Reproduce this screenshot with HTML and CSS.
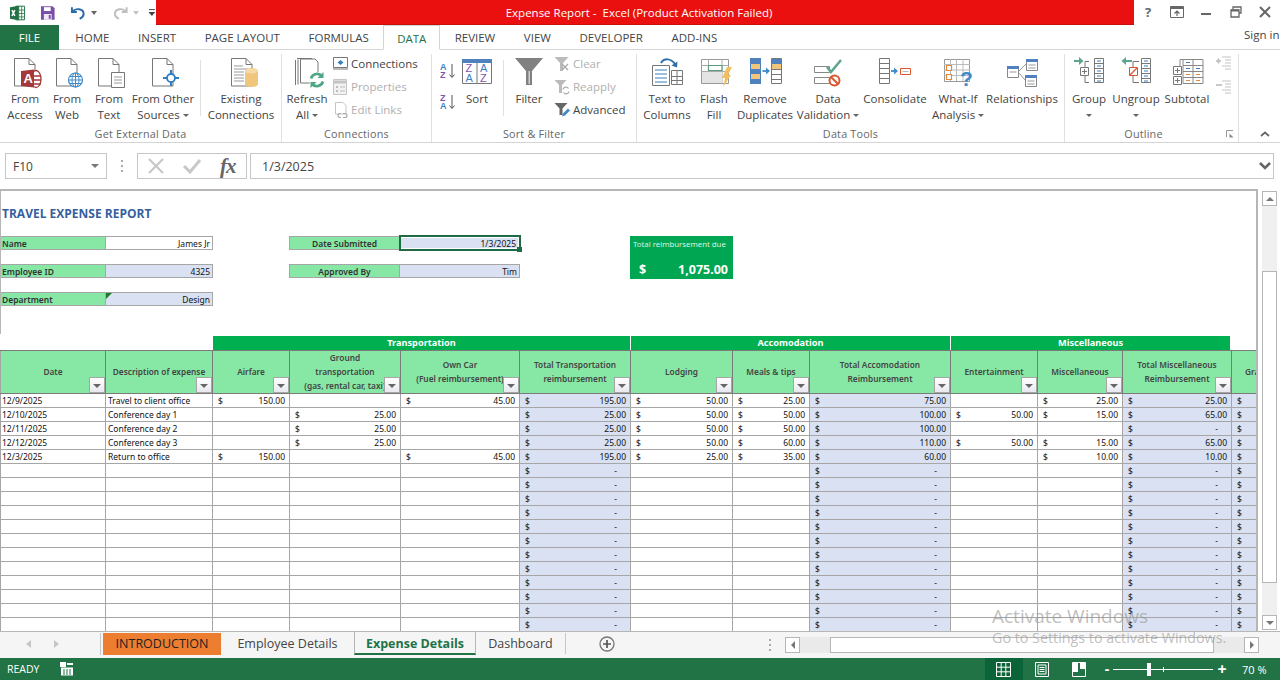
FILE: index.html
```html
<!DOCTYPE html>
<html lang="en">
<head>
<meta charset="utf-8">
<title>Expense Report - Excel</title>
<link rel="stylesheet" href="styles.css">
</head>
<body>
<div class="app">

<header class="titlebar">
  <div class="qat">
    <svg class="q-excel" width="18" height="18" viewBox="0 0 18 18"><path d="M7 2h9v14H7z" fill="#fff" stroke="#217346"/><path d="M10 2v14M13 2v14M7 6h9M7 9.500h9M7 13h9" stroke="#217346" stroke-width=".8"/><path d="M1 3l9-1.500v15L1 15z" fill="#217346"/><path d="M3 6l3 6M6 6l-3 6" stroke="#fff" stroke-width="1.500"/></svg>
    <svg class="q-save" width="16" height="16" viewBox="0 0 16 16"><path d="M1 1h12l2 2v12H1z" fill="#7b4fa8"/><path d="M4 2h7v4H4z" fill="#fff"/><path d="M4 9h8v6H4z" fill="#f0e8f6"/><path d="M9 10h2v4H9z" fill="#7b4fa8"/></svg>
    <svg class="q-undo" width="16" height="16" viewBox="0 0 16 16"><path d="M2 2v5h5M2.500 6.500C6 2.500 14 3.500 14 9c0 2.500-2 4-4 5" fill="none" stroke="#2b6ca8" stroke-width="2"/></svg>
    <span class="q-drop"></span>
    <svg class="q-redo" width="16" height="16" viewBox="0 0 16 16"><path d="M14 2v5H9M13.500 6.500C10 2.500 2 3.500 2 9c0 2.500 2 4 4 5" fill="none" stroke="#bfbfbf" stroke-width="2"/></svg>
    <span class="q-drop q-drop-off"></span>
    <svg class="q-more" width="8" height="10" viewBox="0 0 8 10"><path d="M1 1.500h6" stroke="#444"/><path d="M.500 4h7L4 8z" fill="#444"/></svg>
  </div>
  <div class="title">Expense Report -&nbsp; Excel (Product Activation Failed)</div>
  <div class="winctl">
    <span class="help">?</span>
    <svg class="wc1" width="14" height="12" viewBox="0 0 14 12"><path d="M.500.500h13v11H.500z" fill="none" stroke="#666"/><path d="M1 2h12" stroke="#666" stroke-width="2"/><path d="M7 10V5M4.500 7.500L7 5l2.500 2.500" fill="none" stroke="#666" stroke-width="1.200"/></svg>
    <svg class="wc2" width="12" height="12" viewBox="0 0 12 12"><path d="M1 8h10" stroke="#666" stroke-width="2"/></svg>
    <svg class="wc3" width="12" height="12" viewBox="0 0 12 12"><path d="M3 3V1h8v6H9" fill="none" stroke="#666" stroke-width="1.300"/><path d="M1 4h8v7H1z" fill="none" stroke="#666" stroke-width="1.300"/><path d="M1 4.500h8" stroke="#666" stroke-width="2"/></svg>
    <svg class="wc4" width="12" height="12" viewBox="0 0 12 12"><path d="M1 1l10 10M11 1L1 11" stroke="#666" stroke-width="2"/></svg>
  </div>
</header>

<nav class="tabs">
  <span class="tab-file">FILE</span>
  <span class="tab">HOME</span>
  <span class="tab">INSERT</span>
  <span class="tab">PAGE LAYOUT</span>
  <span class="tab">FORMULAS</span>
  <span class="tab tab-on">DATA</span>
  <span class="tab">REVIEW</span>
  <span class="tab">VIEW</span>
  <span class="tab">DEVELOPER</span>
  <span class="tab">ADD-INS</span>
  <span class="signin">Sign in</span>
</nav>

<section class="ribbon">
  <div class="group g-ext">
    <div class="cmds">
      <div class="btn w42">
        <svg class="ico" viewBox="0 0 40 36"><path d="M9.500 2.500H24l6 6V30H9.500z" fill="#fff" stroke="#777"/><path d="M24 2.500v6h6" fill="none" stroke="#777"/><ellipse cx="31" cy="23" rx="5" ry="8.500" fill="#fff" stroke="#a4373a" stroke-width="1.300"/><path d="M26 20h10M26 24h10M26 28h10" stroke="#a4373a" stroke-width="1.300"/><path d="M16 15l13-1.500v18L16 30z" fill="#a4373a"/><text x="18.500" y="27" class="svg-a">A</text></svg>
        <span>From<br>Access</span>
      </div>
      <div class="btn w42">
        <svg class="ico" viewBox="0 0 40 36"><path d="M9.500 2.500H24l6 6V30H9.500z" fill="#fff" stroke="#777"/><path d="M24 2.500v6h6" fill="none" stroke="#777"/><circle cx="28.500" cy="24" r="7" fill="#fff" stroke="#3f8bc9" stroke-width="1.200"/><path d="M21.500 24h14M22.500 20.500h12M22.500 27.500h12M28.500 17v14" stroke="#3f8bc9"/><ellipse cx="28.500" cy="24" rx="3.500" ry="7" fill="none" stroke="#3f8bc9"/></svg>
        <span>From<br>Web</span>
      </div>
      <div class="btn w42">
        <svg class="ico" viewBox="0 0 40 36"><path d="M9.500 2.500H24l6 6V30H9.500z" fill="#fff" stroke="#777"/><path d="M24 2.500v6h6" fill="none" stroke="#777"/><path d="M22.500 16.500h13v15h-13z" fill="#fff" stroke="#777"/><path d="M25 21h8M25 24h8M25 27h8" stroke="#999"/></svg>
        <span>From<br>Text</span>
      </div>
      <div class="btn w66">
        <svg class="ico" viewBox="0 0 40 36"><path d="M9.500 2.500H24l6 6V30H9.500z" fill="#fff" stroke="#777"/><path d="M24 2.500v6h6" fill="none" stroke="#777"/><path d="M28 14v16M20 22h16" stroke="#2f7fc4" stroke-width="2"/><circle cx="28" cy="22" r="4" fill="#fff" stroke="#2f7fc4" stroke-width="1.800"/></svg>
        <span>From Other<br>Sources<i class="caret"></i></span>
      </div>
      <div class="vsep"></div>
      <div class="btn w80">
        <svg class="ico" viewBox="0 0 40 36"><path d="M10.500 2.500H25l6 6V30H10.500z" fill="#fff" stroke="#777"/><path d="M25 2.500v6h6" fill="none" stroke="#777"/><path d="M13 10h9M13 13h14M13 16h10M13 19h10M13 22h10M13 25h10" stroke="#999"/><path d="M24 15c0-4 13-4 13 0v13c0 4-13 4-13 0z" fill="#efc67b"/><ellipse cx="30.500" cy="15" rx="6.500" ry="2.500" fill="#f6dba8"/></svg>
        <span>Existing<br>Connections</span>
      </div>
    </div>
    <div class="glabel">Get External Data</div>
  </div>

  <div class="group g-conn">
    <div class="cmds">
      <div class="btn w50">
        <svg class="ico" viewBox="0 0 40 36"><path d="M8.500 4v25M11 3.500v25M13.500 3h14.500l3 3v21H13.500z" fill="#fff" stroke="#777"/><path d="M10 2.500h15" stroke="#777"/><circle cx="30" cy="24" r="8" fill="#fff"/><path d="M24 22.500a6.500 6.500 0 0 1 11-2.500M36 25.500a6.500 6.500 0 0 1-11 2.500" fill="none" stroke="#4ea784" stroke-width="2.600"/><path d="M36.500 16v6h-6zM23.500 32v-6h6z" fill="#4ea784"/></svg>
        <span>Refresh<br>All<i class="caret"></i></span>
      </div>
      <div class="smalls">
        <div class="small"><svg viewBox="0 0 16 16"><path d="M1.500 1.500h14v10h-14z" fill="#fff" stroke="#777"/><path d="M1 13h15" stroke="#777"/><path d="M8.500 4l3 2.500-3 2.500-3-2.500z" fill="#2f7fc4"/></svg><span>Connections</span></div>
        <div class="small off"><svg viewBox="0 0 16 16"><path d="M1.500.500h13v15h-13z" fill="#f2f2f2" stroke="#c4c4c4"/><path d="M2 3h12" stroke="#c4c4c4" stroke-width="3"/><path d="M4 7h2v2H4zM4 11h2v2H4z" fill="#bbb"/><path d="M8 8h5M8 12h5" stroke="#bbb"/></svg><span>Properties</span></div>
        <div class="small off"><svg viewBox="0 0 16 16"><path d="M3.500.500H11l3 3V12H3.500z" fill="#fff" stroke="#c4c4c4"/><path d="M6 13.500a2 2 0 0 1 2-2h1M9 15.500H8a2 2 0 0 1 0-4M11 11.500h2a2 2 0 0 1 0 4h-2" fill="none" stroke="#aaa" stroke-width="1.200"/></svg><span>Edit Links</span></div>
      </div>
    </div>
    <div class="glabel">Connections</div>
  </div>

  <div class="group g-sort">
    <div class="cmds">
      <div class="azs">
        <svg viewBox="0 0 18 20"><text x="1" y="9" class="svg-l blue">A</text><text x="1" y="17" class="svg-l purple">Z</text><path d="M13 3v13M10.500 13.500L13 16.500l2.500-3" fill="none" stroke="#555"/></svg>
        <svg viewBox="0 0 18 20"><text x="1" y="9" class="svg-l purple">Z</text><text x="1" y="17" class="svg-l blue">A</text><path d="M13 3v13M10.500 13.500L13 16.500l2.500-3" fill="none" stroke="#555"/></svg>
      </div>
      <div class="btn w40">
        <svg class="ico" viewBox="0 0 40 36"><path d="M5.500 3.500h29v24h-29z" fill="#fff" stroke="#777"/><path d="M5 3h30v4H5z" fill="#4f81bd"/><path d="M20 7v20" stroke="#777"/><text x="8.500" y="16" class="svg-m purple">Z</text><text x="8.500" y="26" class="svg-m blue">A</text><text x="23" y="16" class="svg-m blue">A</text><text x="23" y="26" class="svg-m purple">Z</text></svg>
        <span>Sort</span>
      </div>
      <div class="vsep vsep-sort"></div>
      <div class="btn w50">
        <svg class="ico" viewBox="0 0 40 36"><path d="M6 2h28L23 15v14h-6V15z" fill="#808080"/><path d="M19.500 15v13h1.500V15" fill="#d0d0d0"/></svg>
        <span>Filter</span>
      </div>
      <div class="smalls">
        <div class="small off"><svg viewBox="0 0 16 16"><path d="M.500 1h14L9 7v8H6V7z" fill="#bbb"/><path d="M8 8l6 6M14 8l-6 6" stroke="#aaa" stroke-width="1.400"/></svg><span>Clear</span></div>
        <div class="small off"><svg viewBox="0 0 16 16"><path d="M.500 1h12L8 6v8H5V6z" fill="#bbb"/><path d="M9 10.500a3 3 0 0 1 5.500-1M15 12.500a3 3 0 0 1-5.500 1" fill="none" stroke="#aaa" stroke-width="1.300"/></svg><span>Reapply</span></div>
        <div class="small"><svg viewBox="0 0 16 16"><path d="M.500 1h13L8.500 6.500V13h-3V6.500z" fill="#666"/><path d="M8 14.500l1-3 5-5 2 2-5 5z" fill="#3f8bc9"/></svg><span>Advanced</span></div>
      </div>
    </div>
    <div class="glabel">Sort &amp; Filter</div>
  </div>

  <div class="group g-tools">
    <div class="cmds">
      <div class="btn w60">
        <svg class="ico" viewBox="0 0 40 36"><path d="M5.500 9.500h17v20h-17z" fill="#fff" stroke="#777"/><path d="M8 14h12M8 18h12M8 22h12M8 26h12" stroke="#3f7fbf" stroke-width="1.200"/><path d="M24.500 14.500h11v14h-11z" fill="#fff" stroke="#777"/><path d="M24.500 20.500h11M30 15v13M24.500 24.500h11" stroke="#777"/><path d="M14 7c3-5 10-5 14 1" fill="none" stroke="#2f6fa8" stroke-width="2"/><path d="M24.500 9.500l5.500 2 .5-6z" fill="#2f6fa8"/></svg>
        <span>Text to<br>Columns</span>
      </div>
      <div class="btn w34">
        <svg class="ico" viewBox="0 0 40 36"><path d="M7.500 3.500h27v24h-27z" fill="#fff" stroke="#999"/><path d="M7 9.500h28M7 15.500h28M7 21.500h28M14.500 3v24M28 3v24" stroke="#aaa"/><path d="M14.500 9.500H28v5H14.500z" fill="#fff" stroke="#5c9c80" stroke-width="1.200"/><path d="M8 16h20v11H8z" fill="#e4e4e4"/><path d="M33 11h5l-4 8h3l-8 12 2-9h-3z" fill="#f0c060"/></svg>
        <span>Flash<br>Fill</span>
      </div>
      <div class="btn w68">
        <svg class="ico" viewBox="0 0 40 36"><path d="M5 2h11v26H5z" fill="#4f81bd"/><path d="M6 8h9v5H6zM6 18h9v5H6z" fill="#efc67b"/><path d="M26.500 2.500h10v25h-10z" fill="#fff" stroke="#777"/><path d="M27 3h9v5h-9z" fill="#4f81bd"/><path d="M27 8h9v5h-9z" fill="#efc67b"/><path d="M26.500 13.500h10M26.500 18.500h10M26.500 23.500h10" stroke="#777"/><path d="M17.500 15h4" stroke="#3f8bc9" stroke-width="1.800"/><path d="M21 11.500l4 3.500-4 3.500z" fill="#3f8bc9"/></svg>
        <span>Remove<br>Duplicates</span>
      </div>
      <div class="btn w58">
        <svg class="ico" viewBox="0 0 40 36"><path d="M6.500 10.500h15v6h-15zM6.500 21.500h15v6h-15z" fill="#fff" stroke="#888"/><path d="M19 11l4 5 10-12" fill="none" stroke="#5ca48a" stroke-width="2.500"/><circle cx="26.500" cy="24.500" r="5" fill="#fff" stroke="#d9552e" stroke-width="2"/><path d="M23 21l7 7" stroke="#d9552e" stroke-width="2"/></svg>
        <span>Data<br>Validation<i class="caret"></i></span>
      </div>
      <div class="btn w76">
        <svg class="ico" viewBox="0 0 40 36"><path d="M4.500 2.500h10v25h-10z" fill="#fff" stroke="#777"/><path d="M4.500 7.500h10M4.500 12.500h10M4.500 17.500h10M4.500 22.500h10" stroke="#777"/><path d="M16 15h4" stroke="#3f8bc9" stroke-width="1.800"/><path d="M19 11.500l4 3.500-4 3.500z" fill="#3f8bc9"/><path d="M25.500 12.500h10v6h-10z" fill="#fff" stroke="#d9552e"/><path d="M27.500 15.500h6" stroke="#bbb"/></svg>
        <span>Consolidate</span>
      </div>
      <div class="btn w50">
        <svg class="ico" viewBox="0 0 40 36"><path d="M6.500 3.500h25v22h-25z" fill="#fff" stroke="#999"/><path d="M6 8.500h26M6 14h26M6 19.500h26M12.500 3v22M18.500 3v22M25 3v22" stroke="#bbb"/><path d="M8.500 9.500h5v5h-5zM8.500 18.500h5v5h-5z" fill="#fff" stroke="#e08a3c" stroke-width="1.200"/><text x="22" y="30" class="svg-q">?</text></svg>
        <span>What-If<br>Analysis<i class="caret"></i></span>
      </div>
      <div class="btn w78">
        <svg class="ico" viewBox="0 0 40 36"><path d="M5.500 10.500h11v11h-11zM24.500 3.500h11v11h-11zM23.500 19.500h11v11h-11z" fill="#fff" stroke="#888"/><path d="M5 10h12v3H5zM24 3h12v3H24zM23 19h12v3H23z" fill="#4f81bd"/><path d="M7.500 16h7M26.500 9h7M26.500 12h7M25.500 25h7M25.500 28h7" stroke="#999"/><path d="M17 15l7-7M17 17l6 7" stroke="#999"/></svg>
        <span>Relationships</span>
      </div>
    </div>
    <div class="glabel">Data Tools</div>
  </div>

  <div class="group g-outline">
    <div class="cmds">
      <div class="btn w48">
        <svg class="ico" viewBox="0 0 40 36"><path d="M5 5h7" stroke="#5ca48a" stroke-width="2"/><path d="M10 1l4.500 4-4.500 4z" fill="#5ca48a"/><path d="M20 5.500h-4v6M20 26.500h-4v-7" fill="none" stroke="#777"/><path d="M11.500 11.500h8v8h-8z" fill="#fff" stroke="#777"/><path d="M13 15.500h5M15.500 13v5" stroke="#777"/><path d="M25.500 2.500h9v24h-9z" fill="#fff" stroke="#777"/><path d="M25.500 7.500h9M25.500 12.500h9M25.500 17.500h9M25.500 22.500h9" stroke="#777"/><path d="M28 5h4M28 10h4M28 15h4M28 20h4M28 25h4" stroke="#3f7fbf"/></svg>
        <span>Group<br><i class="caret solo"></i></span>
      </div>
      <div class="btn w46">
        <svg class="ico" viewBox="0 0 40 36"><path d="M9 5h7" stroke="#5ca48a" stroke-width="2"/><path d="M10 1L5.500 5l4.500 4z" fill="#5ca48a"/><path d="M23 5.500h-6v6M23 26.500h-6v-7" fill="none" stroke="#777"/><path d="M14 19l7-7" stroke="#d9552e" stroke-width="1.300"/><path d="M13.500 11.500h8v8h-8z" fill="none" stroke="#d9552e"/><path d="M25.500 2.500h9v24h-9z" fill="#fff" stroke="#777"/><path d="M25.500 7.500h9M25.500 12.500h9M25.500 17.500h9M25.500 22.500h9" stroke="#777"/><path d="M28 5h4M28 10h4M28 15h4M28 20h4M28 25h4" stroke="#3f7fbf"/></svg>
        <span>Ungroup<br><i class="caret solo"></i></span>
      </div>
      <div class="btn w56">
        <svg class="ico" viewBox="0 0 40 36"><path d="M16 3.500h-3v7M16 3.500h20v24H16zM16 9.500h20M16 15.500h20M16 21.500h20M26 3v24" fill="none" stroke="#888"/><path d="M19 6.500h4M19 12.500h4M29 12.500h4" stroke="#3f7fbf"/><path d="M19 18.500h4M29 18.500h4M19 24.500h4M29 24.500h4" stroke="#e08a3c"/><path d="M6.500 10.500h8v8h-8zM6.500 20.500h8v8h-8z" fill="#fff" stroke="#777"/><path d="M8 14.500h5M10.500 12v5M8 24.500h5M10.500 22v5" stroke="#777"/></svg>
        <span>Subtotal</span>
      </div>
      <div class="outline-minis">
        <svg viewBox="0 0 16 16"><path d="M0 5h5M2.500 2.500v5" stroke="#bbb" stroke-width="1.600"/><path d="M6 1h9M9 4h6M9 7h6M6 10h9M9 13h6" stroke="#c4c4c4"/></svg>
        <svg viewBox="0 0 16 16"><path d="M0 5h6" stroke="#bbb" stroke-width="1.600"/><path d="M6 1h9M9 4h6M9 7h6M6 10h9M9 13h6" stroke="#c4c4c4"/></svg>
      </div>
    </div>
    <div class="glabel">Outline</div>
    <svg class="launcher" width="8" height="8" viewBox="0 0 8 8"><path d="M.500 7V.500H7" fill="none" stroke="#999"/><path d="M7.500 7.500H3.500V3.500z" fill="#888"/></svg>
  </div>
  <svg class="collapse" width="10" height="6" viewBox="0 0 10 6"><path d="M1 5l4-3.500L9 5" fill="none" stroke="#666" stroke-width="1.700"/></svg>
</section>

<div class="formula">
  <div class="namebox"><span>F10</span><i class="nb-caret"></i></div>
  <div class="fdots"></div>
  <div class="fbtns">
    <svg width="18" height="18" viewBox="0 0 18 18"><path d="M2 2l14 14M16 2L2 16" stroke="#c8c8c8" stroke-width="2.200"/></svg>
    <svg width="20" height="18" viewBox="0 0 20 18"><path d="M2 9l6 6L18 3" fill="none" stroke="#c8c8c8" stroke-width="3"/></svg>
    <span class="fx">fx</span>
  </div>
  <div class="finput"><span>1/3/2025</span><svg class="fchev" width="14" height="10" viewBox="0 0 14 10"><path d="M2 2l5 5 5-5" fill="none" stroke="#666" stroke-width="2.600"/></svg></div>
</div>

<main class="workspace">
  <div class="sheet">
    <h1 class="report">TRAVEL EXPENSE REPORT</h1>
    <div class="form">
      <div class="lab f-a1">Name</div><div class="val white f-b1">James Jr</div>
      <div class="lab ctr f-d1">Date Submitted</div><div class="val f-e1 sel">1/3/2025</div>
      <div class="totalbox">
        <div class="tb-label">Total reimbursement due</div>
        <div class="tb-amt"><span>$</span><span>1,075.00</span></div>
      </div>
      <div class="lab f-a3">Employee ID</div><div class="val f-b3">4325</div>
      <div class="lab ctr f-d3">Approved By</div><div class="val f-e3">Tim</div>
      <div class="lab f-a5">Department</div><div class="val f-b5 flag">Design</div>
    </div>
    <div class="bands">
      <div class="band b1">Transportation</div>
      <div class="band b2">Accomodation</div>
      <div class="band b3">Miscellaneous</div>
    </div>
    <table class="grid">
      <colgroup><col class="c1"><col class="c2"><col class="c3"><col class="c4"><col class="c5"><col class="c6"><col class="c7"><col class="c8"><col class="c9"><col class="c10"><col class="c11"><col class="c12"><col class="c13"></colgroup>
      <thead><tr>
        <th>Date<b class="fb"></b></th>
        <th class="lk">Description of expense<b class="fb"></b></th>
        <th class="dk">Airfare<b class="fb"></b></th>
        <th class="lk">Ground<br>transportation<br>(gas, rental car, taxi)<b class="fb"></b></th>
        <th class="dk">Own Car<br>(Fuel reimbursement)<b class="fb"></b></th>
        <th class="lk">Total Transportation<br>reimbursement<b class="fb"></b></th>
        <th class="dk">Lodging<b class="fb"></b></th>
        <th class="lk">Meals &amp; tips<b class="fb"></b></th>
        <th class="dk">Total Accomodation<br>Reimbursement<b class="fb"></b></th>
        <th class="lk">Entertainment<b class="fb"></b></th>
        <th class="dk">Miscellaneous<b class="fb"></b></th>
        <th class="lk">Total Miscellaneous<br>Reimbursement<b class="fb"></b></th>
        <th class="dk grand">Grand Total</th>
      </tr></thead>
      <tbody>
        <tr><td class="t">12/9/2025</td><td class="t d">Travel to client office</td><td class="a dk"><i>$</i>150.00</td><td></td><td class="a dk"><i>$</i>45.00</td><td class="a s"><i>$</i>195.00</td><td class="a dk"><i>$</i>50.00</td><td class="a"><i>$</i>25.00</td><td class="a s"><i>$</i>75.00</td><td></td><td class="a"><i>$</i>25.00</td><td class="a s"><i>$</i>25.00</td><td class="a s"><i>$</i></td></tr>
        <tr><td class="t">12/10/2025</td><td class="t d">Conference day 1</td><td class="dk"></td><td class="a"><i>$</i>25.00</td><td class="dk"></td><td class="a s"><i>$</i>25.00</td><td class="a dk"><i>$</i>50.00</td><td class="a"><i>$</i>50.00</td><td class="a s"><i>$</i>100.00</td><td class="a"><i>$</i>50.00</td><td class="a"><i>$</i>15.00</td><td class="a s"><i>$</i>65.00</td><td class="a s"><i>$</i></td></tr>
        <tr><td class="t">12/11/2025</td><td class="t d">Conference day 2</td><td class="dk"></td><td class="a"><i>$</i>25.00</td><td class="dk"></td><td class="a s"><i>$</i>25.00</td><td class="a dk"><i>$</i>50.00</td><td class="a"><i>$</i>50.00</td><td class="a s"><i>$</i>100.00</td><td></td><td></td><td class="a s"><i>$</i><u>-</u></td><td class="a s"><i>$</i></td></tr>
        <tr><td class="t">12/12/2025</td><td class="t d">Conference day 3</td><td class="dk"></td><td class="a"><i>$</i>25.00</td><td class="dk"></td><td class="a s"><i>$</i>25.00</td><td class="a dk"><i>$</i>50.00</td><td class="a"><i>$</i>60.00</td><td class="a s"><i>$</i>110.00</td><td class="a"><i>$</i>50.00</td><td class="a"><i>$</i>15.00</td><td class="a s"><i>$</i>65.00</td><td class="a s"><i>$</i></td></tr>
        <tr><td class="t">12/3/2025</td><td class="t d">Return to office</td><td class="a dk"><i>$</i>150.00</td><td></td><td class="a dk"><i>$</i>45.00</td><td class="a s"><i>$</i>195.00</td><td class="a dk"><i>$</i>25.00</td><td class="a"><i>$</i>35.00</td><td class="a s"><i>$</i>60.00</td><td></td><td class="a"><i>$</i>10.00</td><td class="a s"><i>$</i>10.00</td><td class="a s"><i>$</i></td></tr>
        <tr><td></td><td></td><td class="dk"></td><td></td><td class="dk"></td><td class="a s"><i>$</i><u>-</u></td><td class="dk"></td><td></td><td class="a s"><i>$</i><u>-</u></td><td></td><td></td><td class="a s"><i>$</i><u>-</u></td><td class="a s"><i>$</i></td></tr>
        <tr><td></td><td></td><td class="dk"></td><td></td><td class="dk"></td><td class="a s"><i>$</i><u>-</u></td><td class="dk"></td><td></td><td class="a s"><i>$</i><u>-</u></td><td></td><td></td><td class="a s"><i>$</i><u>-</u></td><td class="a s"><i>$</i></td></tr>
        <tr><td></td><td></td><td class="dk"></td><td></td><td class="dk"></td><td class="a s"><i>$</i><u>-</u></td><td class="dk"></td><td></td><td class="a s"><i>$</i><u>-</u></td><td></td><td></td><td class="a s"><i>$</i><u>-</u></td><td class="a s"><i>$</i></td></tr>
        <tr><td></td><td></td><td class="dk"></td><td></td><td class="dk"></td><td class="a s"><i>$</i><u>-</u></td><td class="dk"></td><td></td><td class="a s"><i>$</i><u>-</u></td><td></td><td></td><td class="a s"><i>$</i><u>-</u></td><td class="a s"><i>$</i></td></tr>
        <tr><td></td><td></td><td class="dk"></td><td></td><td class="dk"></td><td class="a s"><i>$</i><u>-</u></td><td class="dk"></td><td></td><td class="a s"><i>$</i><u>-</u></td><td></td><td></td><td class="a s"><i>$</i><u>-</u></td><td class="a s"><i>$</i></td></tr>
        <tr><td></td><td></td><td class="dk"></td><td></td><td class="dk"></td><td class="a s"><i>$</i><u>-</u></td><td class="dk"></td><td></td><td class="a s"><i>$</i><u>-</u></td><td></td><td></td><td class="a s"><i>$</i><u>-</u></td><td class="a s"><i>$</i></td></tr>
        <tr><td></td><td></td><td class="dk"></td><td></td><td class="dk"></td><td class="a s"><i>$</i><u>-</u></td><td class="dk"></td><td></td><td class="a s"><i>$</i><u>-</u></td><td></td><td></td><td class="a s"><i>$</i><u>-</u></td><td class="a s"><i>$</i></td></tr>
        <tr><td></td><td></td><td class="dk"></td><td></td><td class="dk"></td><td class="a s"><i>$</i><u>-</u></td><td class="dk"></td><td></td><td class="a s"><i>$</i><u>-</u></td><td></td><td></td><td class="a s"><i>$</i><u>-</u></td><td class="a s"><i>$</i></td></tr>
        <tr><td></td><td></td><td class="dk"></td><td></td><td class="dk"></td><td class="a s"><i>$</i><u>-</u></td><td class="dk"></td><td></td><td class="a s"><i>$</i><u>-</u></td><td></td><td></td><td class="a s"><i>$</i><u>-</u></td><td class="a s"><i>$</i></td></tr>
        <tr><td></td><td></td><td class="dk"></td><td></td><td class="dk"></td><td class="a s"><i>$</i><u>-</u></td><td class="dk"></td><td></td><td class="a s"><i>$</i><u>-</u></td><td></td><td></td><td class="a s"><i>$</i><u>-</u></td><td class="a s"><i>$</i></td></tr>
        <tr><td></td><td></td><td class="dk"></td><td></td><td class="dk"></td><td class="a s"><i>$</i><u>-</u></td><td class="dk"></td><td></td><td class="a s"><i>$</i><u>-</u></td><td></td><td></td><td class="a s"><i>$</i><u>-</u></td><td class="a s"><i>$</i></td></tr>
        <tr><td></td><td></td><td class="dk"></td><td></td><td class="dk"></td><td class="a s"><i>$</i><u>-</u></td><td class="dk"></td><td></td><td class="a s"><i>$</i><u>-</u></td><td></td><td></td><td class="a s"><i>$</i><u>-</u></td><td class="a s"><i>$</i></td></tr>
      </tbody>
    </table>
  </div>
  <div class="vscroll">
    <div class="vs-btn"><i class="tri-up"></i></div>
    <div class="vs-track"><div class="vs-thumb"></div></div>
    <div class="vs-btn"><i class="tri-down"></i></div>
  </div>
</main>

<div class="sheetbar">
  <div class="nav-arrows"><i class="ar-l"></i><i class="ar-r"></i></div>
  <div class="stab orange">INTRODUCTION</div>
  <div class="stab emp">Employee Details</div>
  <div class="stab active">Expense Details</div>
  <div class="stab dash">Dashboard</div>
  <svg class="plus" width="16" height="16" viewBox="0 0 16 16"><circle cx="8" cy="8" r="7" fill="none" stroke="#777" stroke-width="1.300"/><path d="M4 8h8M8 4v8" stroke="#555" stroke-width="1.700"/></svg>
  <div class="hdots"></div>
  <div class="hscroll">
    <div class="hs-btn"><i class="tri-left"></i></div>
    <div class="hs-track"><div class="hs-thumb"></div></div>
    <div class="hs-btn"><i class="tri-right"></i></div>
  </div>
</div>

<footer class="status">
  <span class="ready">READY</span>
  <svg class="macro" width="14" height="14" viewBox="0 0 14 14"><path d="M0 0h6v5H0z" fill="#fff"/><path d="M1 5.500h12v8H1z" fill="#fff"/><path d="M3 8h2M6 8h2M9 8h2M3 10h2M6 10h2M9 10h2M3 12h2M6 12h2M9 12h2" stroke="#217346"/><path d="M7 1h6v2H7z" fill="#fff"/></svg>
  <div class="views">
    <div class="view on"><svg width="15" height="15" viewBox="0 0 15 15"><path d="M.500.500h14v14H.500zM5.200.500v14M9.800.500v14M.500 5.200h14M.500 9.800h14" fill="none" stroke="#fff"/></svg></div>
    <div class="view"><svg width="14" height="15" viewBox="0 0 14 15"><path d="M.500.500h13v14H.500z" fill="none" stroke="#fff"/><path d="M3 3h8v9H3z" fill="none" stroke="#fff"/><path d="M4.500 5.500h5M4.500 7.500h5M4.500 9.500h5" stroke="#fff"/></svg></div>
    <div class="view v3"><svg width="14" height="15" viewBox="0 0 14 15"><path d="M.500.500h13v14H.500z" fill="none" stroke="#fff"/><path d="M1 1h5v9H1zM8 1h5v6H8z" fill="#fff"/></svg></div>
  </div>
  <div class="zoomer">
    <span class="zm">-</span>
    <div class="slider"><i class="tick"></i><i class="thumb"></i></div>
    <span class="zp">+</span>
  </div>
  <span class="pct">70 %</span>
</footer>

<aside class="watermark">
  <div class="wm1">Activate Windows</div>
  <div class="wm2">Go to Settings to activate Windows.</div>
</aside>
</div>
</body>
</html>
```

FILE: styles.css
```css
* { box-sizing: border-box; }
html, body { margin: 0; padding: 0; }
body { width: 1280px; height: 680px; overflow: hidden; background: #fff; font-family: "Open Sans", "Noto Sans", sans-serif; color: #444; }
.app { position: relative; width: 1280px; height: 680px; display: flex; flex-direction: column; }

/* title bar */
.titlebar { display: flex; height: 25px; flex: none; }
.qat { width: 156px; display: flex; align-items: center; position: relative; background: #fff; }
.q-excel { margin-left: 9px; }
.q-save { margin-left: 13px; }
.q-undo { margin-left: 15px; }
.q-redo { margin-left: 16px; }
.q-more { margin-left: 9px; }
.q-drop { width: 0; height: 0; margin-left: 5px; border: 3px solid transparent; border-top: 4px solid #666; border-bottom: 0; }
.q-drop-off { border-top-color: #c4c4c4; }
.title { width: 978px; padding-right: 12px; background: #ea1010; border-bottom: 1px solid #c90c0c; color: #fff; font-size: 11.500px; line-height: 25px; text-align: center; }
.winctl { flex: 1; display: flex; align-items: center; padding: 0 0 2px 9px; }
.help { width: 10px; font-weight: 700; font-size: 13px; color: #666; text-align: center; }
.wc1 { margin-left: 17px; }
.wc2 { margin-left: 16px; }
.wc3 { margin-left: 18px; }
.wc4 { margin-left: 17px; }

/* tabs */
.tabs { height: 25px; flex: none; display: flex; align-items: stretch; border-bottom: 1px solid #d4d4d4; font-size: 11.500px; position: relative; color: #444; }
.tab-file { width: 59px; background: #217346; color: #fff; text-align: center; line-height: 25px; margin-bottom: -1px; }
.tab { padding: 0 14.300px; line-height: 25px; white-space: nowrap; }
.tab-file + .tab { margin-left: 2px; }
.tab-on { color: #217346; border: 1px solid #d4d4d4; border-bottom: 1px solid #fff; margin-bottom: -1px; padding: 0 13px; }
.signin { position: absolute; right: 0; top: 1px; line-height: 18px; white-space: nowrap; width: 36px; overflow: hidden; }

/* ribbon */
.ribbon { height: 93px; flex: none; display: flex; border-bottom: 1px solid #d4d4d4; position: relative; font-size: 11.500px; color: #444; }
.group { position: relative; display: flex; flex-direction: column; padding-top: 4px; height: 88px; margin-top: 4px; border-right: 1px solid #e0e0e0; }
.group .cmds { margin-top: -4px; }
.g-ext { width: 282px; }
.g-ext .cmds { padding-left: 4px; }
.g-conn { width: 150px; }
.g-sort { width: 205px; }
.g-tools { width: 428px; }
.g-outline { width: 174px; }
.cmds { display: flex; height: 72px; }
.glabel { text-align: center; font-size: 10.800px; line-height: 14px; color: #666; margin-top: 1px; letter-spacing: .2px; }
.g-outline .glabel { padding-right: 16px; }
.btn { display: flex; flex-direction: column; align-items: center; text-align: center; flex: none; line-height: 16px; white-space: nowrap; }
.btn .ico { width: 40px; height: 36px; margin: 2px 0 -1px; flex: none; }
.w34 { width: 34px; }
.w40 { width: 40px; }
.w42 { width: 42px; }
.w46 { width: 46px; }
.w48 { width: 48px; }
.w50 { width: 50px; }
.w56 { width: 56px; }
.w58 { width: 58px; }
.w60 { width: 60px; }
.w66 { width: 66px; }
.w68 { width: 68px; }
.w76 { width: 76px; }
.w78 { width: 78px; }
.w80 { width: 80px; }
.caret { display: inline-block; width: 0; height: 0; margin-left: 3px; vertical-align: 2px; border: 3px solid transparent; border-top: 3px solid #666; border-bottom: 0; }
.caret.solo { margin-left: 0; }
.vsep { width: 1px; height: 56px; background: #e0e0e0; margin: 6px 0 0 4px; flex: none; }
.vsep-sort { margin-left: 6px; }
.smalls { display: flex; flex-direction: column; gap: 5px; padding-top: 1px; }
.small { display: flex; align-items: center; gap: 3px; height: 18px; white-space: nowrap; line-height: 18px; }
.small svg { width: 16px; height: 16px; flex: none; }
.small.off { color: #b0b0b0; }
.azs { display: flex; flex-direction: column; gap: 11px; margin-left: 7px; padding-top: 7px; flex: none; }
.azs svg { width: 18px; height: 20px; }
.outline-minis { display: flex; flex-direction: column; gap: 8px; padding-top: 2px; margin-left: 1px; }
.outline-minis svg { width: 16px; height: 16px; }
.launcher { position: absolute; right: 4px; bottom: 4px; }
.collapse { position: absolute; left: 1260px; top: 81px; }
.svg-a { font: 700 13px "Liberation Sans", sans-serif; fill: #fff; }
.svg-l { font: 700 9px "Liberation Sans", sans-serif; }
.svg-m { font: 400 11px "Liberation Sans", sans-serif; }
.svg-q { font: 700 21px "Liberation Sans", sans-serif; fill: #3f8bc9; }
.blue { fill: #3f7fbf; }
.purple { fill: #7e57ab; }

/* formula */
.formula { height: 47px; flex: none; display: flex; align-items: flex-start; padding: 10px 6px 0 5px; position: relative; font-size: 12px; color: #444; }
.namebox { width: 102px; height: 26px; border: 1px solid #c6c6c6; display: flex; align-items: center; justify-content: space-between; padding: 0 7px; }
.nb-caret { width: 0; height: 0; border: 4px solid transparent; border-top: 4px solid #777; border-bottom: 0; }
.fdots { width: 2px; height: 12px; margin: 7px 14px 0; background: repeating-linear-gradient(to bottom, #aaa 0, #aaa 2px, transparent 2px, transparent 5px); }
.fbtns { width: 110px; height: 26px; border: 1px solid #c6c6c6; display: flex; align-items: center; gap: 17px; padding-left: 9px; }
.fx { font: italic 700 21px "Liberation Serif", serif; color: #666; margin-left: 1px; letter-spacing: -1px; }
.finput { flex: 1; height: 26px; margin-left: 3px; border: 1px solid #c6c6c6; display: flex; align-items: center; justify-content: space-between; padding: 0 1px 0 11px; font-size: 12.500px; }

/* sheet */
.workspace { height: 442px; flex: none; display: flex; position: relative; margin-top: -1px; }
.sheet { width: 1258px; height: 442px; border-top: 2px solid #b6b6b6; border-right: 2px solid #b6b6b6; overflow: hidden; font-size: 8.500px; color: #111; font-family: "Noto Sans", sans-serif; position: relative; }
.report { margin: 0; height: 45px; padding: 16px 0 0 1px; font-size: 12px; line-height: 14px; font-weight: 700; color: #365f9e; font-family: "Open Sans", sans-serif; border-left: 1px solid #b6b6b6; }
.form { display: grid; grid-template-columns: 105px 107px 76px 111px 120px 110px 103px; grid-template-rows: repeat(7, 14px); height: 98px; position: relative; border-left: 1px solid #b6b6b6; }
.lab { background: #87e8a5; border: 1px solid #a6a6a6; border-left: 0; padding: 0 1px; line-height: 13px; font-weight: 600; color: #333; white-space: nowrap; }
.ctr { text-align: center; border-left: 1px solid #a6a6a6; }
.val { background: #d9e1f2; border: 1px solid #a6a6a6; border-left: 0; text-align: right; padding: 0 2px; line-height: 13px; white-space: nowrap; }
.val.white { background: #fff; }
.f-a1 { grid-area: 1 / 1; }
.f-b1 { grid-area: 1 / 2; }
.f-d1 { grid-area: 1 / 4; }
.f-e1 { grid-area: 1 / 5; }
.f-a3 { grid-area: 3 / 1; }
.f-b3 { grid-area: 3 / 2; }
.f-d3 { grid-area: 3 / 4; }
.f-e3 { grid-area: 3 / 5; }
.f-a5 { grid-area: 5 / 1; }
.f-b5 { grid-area: 5 / 2; }
.flag { position: relative; }
.flag::before { content: ""; position: absolute; left: 0; top: 0; border: 3px solid transparent; border-top-color: #1c7c2c; border-left-color: #1c7c2c; }
.sel { position: relative; outline: 2px solid #1f6b45; outline-offset: -1px; z-index: 1; box-shadow: inset 0 0 0 1px #fff; padding-right: 3px; }
.sel::after { content: ""; position: absolute; right: -3px; bottom: -3px; width: 5px; height: 5px; background: #1f6b45; border: 0; }
.totalbox { grid-area: 1 / 7 / 4 / 8; background: #00a651; color: #fff; height: 43px; display: flex; flex-direction: column; padding: 2px 5px 0 3px; }
.tb-label { font-size: 7.800px; line-height: 12px; color: #d8f3e2; white-space: nowrap; }
.tb-amt { display: flex; justify-content: space-between; font-size: 12.500px; font-weight: 700; line-height: 18px; margin-top: 11px; padding: 0 0 0 6px; }
.bands { display: flex; height: 16px; padding: 2px 0 0 213px; }
.band { background: #00b050; color: #fff; height: 14px; line-height: 13px; font-weight: 700; text-align: center; font-size: 9.200px; border-right: 1px solid #fff; }
.b1 { width: 418px; }
.b2 { width: 320px; }
.b3 { width: 280px; }

.grid { border-collapse: collapse; table-layout: fixed; width: 1256px; }
.c1 { width: 105px; }
.c2 { width: 107px; }
.c3 { width: 77px; }
.c4 { width: 111px; }
.c5 { width: 119px; }
.c6 { width: 111px; }
.c7 { width: 102px; }
.c8 { width: 77px; }
.c9 { width: 141px; }
.c10 { width: 87px; }
.c11 { width: 85px; }
.c12 { width: 109px; }
.c13 { width: 25px; }
.grid th { height: 41px; padding: 0 1px; background: #87e8a5; border: 1px solid #7a7a7a; font-weight: 600; font-size: 8.300px; line-height: 14px; color: #444; text-align: center; white-space: nowrap; overflow: hidden; position: relative; }
.grid th:first-child { border-left-color: #a6a6a6; }
.grid th.dk { border-left-color: #333; }
.grid th.lk { border-left-color: #888; }
.grid thead tr { border-top: 1px solid #333; }
.grid th.grand { text-align: left; padding-left: 13px; }
.fb { position: absolute; right: 0; bottom: 0; width: 16px; height: 16px; background: linear-gradient(#fff, #e8e8f0); border: 1px solid #a6a6a6; }
.fb::after { content: ""; position: absolute; left: 3px; top: 6px; border: 4px solid transparent; border-top: 4px solid #666; border-bottom: 0; }
.grid td { height: 14px; padding: 0; border: 1px solid #a6a6a6; line-height: 12px; white-space: nowrap; overflow: hidden; }
.grid td.dk { border-left-color: #555; }
.grid td.t { padding-left: 1px; text-align: left; }
.grid td.d { padding-left: 2px; }
.grid td.a { padding: 0 4px 0 5px; text-align: right; }
.grid td.s { background: #d9e1f2; border-left-color: #666; }
.grid i { float: left; font-style: normal; }
.grid u { text-decoration: none; padding-right: 9px; }

/* vertical scroll */
.vscroll { width: 22px; display: flex; flex-direction: column; padding: 2px 3px 1px 4px; }
.vs-btn { height: 15px; flex: none; border: 1px solid #b6b6b6; background: #fff; display: flex; align-items: center; justify-content: center; }
.vs-track { flex: 1; background: #f0f0f0; padding-top: 65px; }
.vs-thumb { height: 312px; background: #fff; border: 1px solid #b6b6b6; }
.tri-up { border: 4px solid transparent; border-bottom: 4px solid #777; border-top: 0; }
.tri-down { border: 4px solid transparent; border-top: 4px solid #777; border-bottom: 0; }
.tri-left { border: 4px solid transparent; border-right: 4px solid #777; border-left: 0; }
.tri-right { border: 4px solid transparent; border-left: 4px solid #777; border-right: 0; }

/* sheet tabs */
.sheetbar { height: 27px; flex: none; background: #f5f5f5; display: flex; align-items: stretch; position: relative; font-size: 12.500px; color: #444; border-top: 1px solid #b6b6b6; }
.nav-arrows { width: 101px; display: flex; align-items: center; gap: 23px; padding-left: 26px; border-right: 1px solid #c6c6c6; height: 22px; margin-top: 1px; margin-right: 2px; }
.ar-l { border: 4px solid transparent; border-right: 5px solid #c6c6c6; border-left: 0; }
.ar-r { border: 4px solid transparent; border-left: 5px solid #c6c6c6; border-right: 0; }
.stab { line-height: 22px; white-space: nowrap; text-align: center; height: 23px; }
.orange { width: 118px; background: #ed7d31; color: #222; margin-top: 1px; height: 22px; }
.emp { width: 133px; padding-top: 1px; }
.active { width: 122px; margin-top: -1px; height: 24px; padding-top: 1px; background: #f5f5f5; color: #217346; font-weight: 700; border: 1px solid #b6b6b6; border-bottom: 2px solid #217346; }
.dash { width: 90px; margin-right: 33px; border-right: 1px solid #c6c6c6; height: 21px; margin-top: 1px; }
.plus { margin: 4px 0 0 0; }
.hdots { width: 2px; height: 12px; margin: 7px 0 0 154px; background: repeating-linear-gradient(to bottom, #aaa 0, #aaa 2px, transparent 2px, transparent 5px); }
.hscroll { position: absolute; left: 785px; top: 5px; width: 474px; height: 16px; display: flex; }
.hs-btn { width: 15px; height: 16px; background: #fff; border: 1px solid #b6b6b6; display: flex; align-items: center; justify-content: center; flex: none; }
.hs-track { flex: 1; background: #eaeaea; padding-left: 30px; }
.hs-thumb { width: 384px; height: 16px; background: #fff; border: 1px solid #b6b6b6; }

/* status */
.status { height: 22px; flex: 1; background: #217346; color: #fff; display: flex; align-items: center; font-size: 10.500px; position: relative; }
.ready { margin-left: 7px; width: 53px; }
.views { display: flex; height: 22px; margin-left: 911px; }
.view { width: 38px; display: flex; align-items: center; justify-content: center; }
.view.v3 { width: 35px; }
.view.on { background: #0b6437; padding-right: 2px; }
.zoomer { display: flex; align-items: center; margin-left: 5px; }
.zm { width: 12px; text-align: center; font-weight: 700; font-size: 14px; line-height: 14px; }
.slider { width: 100px; height: 1px; background: #fff; position: relative; }
.thumb { position: absolute; left: 34px; top: -6px; width: 4px; height: 13px; background: #fff; }
.tick { position: absolute; left: 50px; top: -2px; width: 1px; height: 5px; background: #fff; }
.zp { width: 18px; text-align: center; font-weight: 700; font-size: 16px; line-height: 14px; }
.pct { margin-left: 11px; font-size: 11px; white-space: nowrap; }

/* watermark */
.watermark { position: absolute; left: 992px; top: 604px; color: rgba(150,150,150,.62); pointer-events: none; white-space: nowrap; }
.wm1 { font-size: 19px; line-height: 24px; }
.wm2 { font-size: 14.300px; line-height: 20px; }
```
